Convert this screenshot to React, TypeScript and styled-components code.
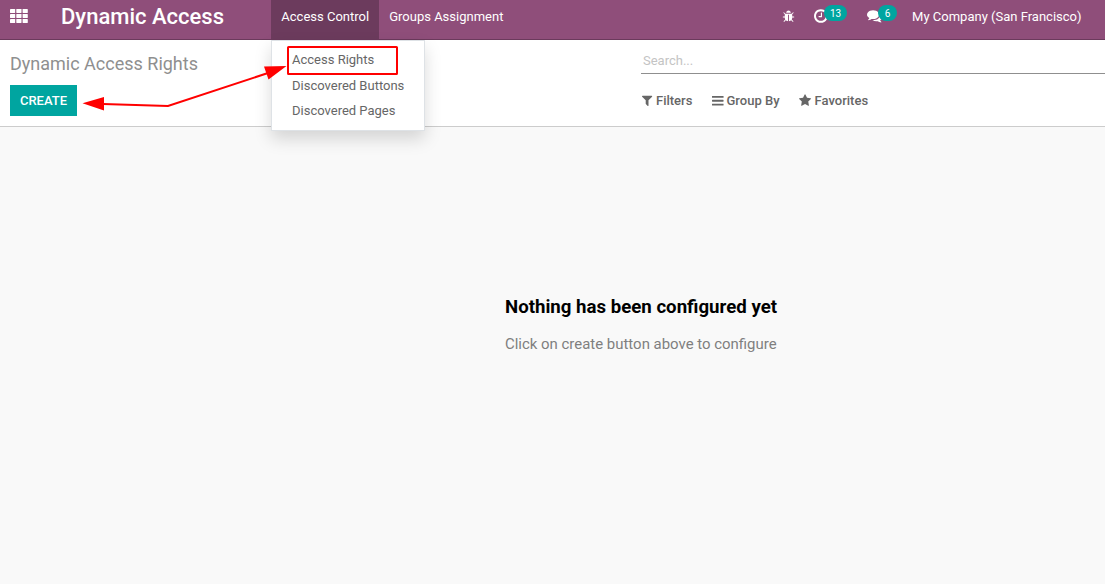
import React from "react";
import styled, { createGlobalStyle } from "styled-components";

const GlobalStyle = createGlobalStyle`
  * { box-sizing: border-box; }
  html, body, #root { height: 100%; }
  body {
    margin: 0;
    overflow: hidden;
    background: #f9f9f9;
    color: #666;
    font-family: Roboto, "Liberation Sans", sans-serif;
    font-size: 13px;
    line-height: 1.5;
  }
`;

const Page = styled.div`
  position: relative;
  display: flex;
  flex-direction: column;
  height: 100%;
`;

const Navbar = styled.header`
  display: flex;
  flex: none;
  height: 40px;
  padding-left: 10px;
  background: #8f4e7a;
  border-bottom: 1px solid #6b3a5c;
  color: #fff;
`;

const AppsIcon = styled.svg`
  display: block;
  flex: none;
  width: 18px;
  height: 14px;
  margin-top: 9px;
  fill: #fff;
`;

const Brand = styled.div`
  width: 210px;
  margin-left: 33px;
  font-size: 22px;
  font-weight: 500;
  line-height: 33px;
  white-space: nowrap;
`;

const MenuEntry = styled.div<{ $active?: boolean }>`
  position: relative;
  height: 39px;
  padding: 0 9.8px 0 10.3px;
  line-height: 33px;
  white-space: nowrap;
  background: ${(p) => (p.$active ? "#6c3b5d" : "transparent")};
`;

const Dropdown = styled.div`
  position: absolute;
  top: 40px;
  left: 0;
  z-index: 2;
  width: 154px;
  height: 91px;
  padding-top: 7px;
  background: #fff;
  border: 1px solid #dee2e6;
  box-shadow: 0 8px 16px rgba(0, 0, 0, 0.15);
  color: #666;
`;

const DropdownItem = styled.div`
  height: 25.5px;
  padding-left: 20px;
  line-height: 24px;
`;

const Systray = styled.div`
  display: flex;
  margin-left: auto;
  padding-right: 23.5px;
`;

const TrayItem = styled.div<{ $width: number }>`
  position: relative;
  width: ${(p) => p.$width}px;
`;

const Glyph = styled.svg<{ $size: number; $top?: number }>`
  display: block;
  flex: none;
  width: ${(p) => p.$size}px;
  height: ${(p) => p.$size}px;
  margin-top: ${(p) => p.$top ?? 0}px;
  fill: currentColor;
`;

const Badge = styled.span<{ $left: number; $width: number }>`
  position: absolute;
  top: 5px;
  left: ${(p) => p.$left}px;
  width: ${(p) => p.$width}px;
  height: 16px;
  border-radius: 8px;
  background: #00a5a0;
  font-size: 10px;
  line-height: 17px;
  text-align: center;
`;

const Company = styled.div`
  line-height: 33px;
  white-space: nowrap;
`;

const ControlPanel = styled.section`
  display: flex;
  flex: none;
  justify-content: space-between;
  height: 87px;
  padding-left: 10px;
  background: #fff;
  border-bottom: 1px solid #ccc;
`;

const Title = styled.h1`
  margin: 10px 0 7px;
  color: #8f8f8f;
  font-size: 18px;
  font-weight: 400;
  line-height: 28px;
`;

const CreateButton = styled.button`
  display: block;
  width: 67px;
  height: 31px;
  padding: 0;
  border: 0;
  background: #00a5a0;
  color: #fff;
  font: 500 13px/31px Roboto, sans-serif;
`;

const SearchArea = styled.div`
  width: 464px;
`;

const SearchInput = styled.input`
  display: block;
  width: 100%;
  height: 26px;
  margin-top: 8px;
  padding: 0 2px;
  border: 0;
  border-bottom: 1px solid #8f8f8f;
  background: transparent;
  font: 13px Roboto, sans-serif;
  outline: none;
  &::placeholder { color: #c4c4c4; opacity: 1; }
`;

const FilterBar = styled.div`
  display: flex;
  margin-top: 17px;
`;

const FilterButton = styled.div<{ $width: number; $gap?: number }>`
  display: flex;
  gap: ${(p) => p.$gap ?? 1}px;
  width: ${(p) => p.$width}px;
  padding-left: ${(p) => (p.$gap ? 0 : 1)}px;
  font-weight: 500;
  line-height: 20px;
  white-space: nowrap;
`;

const Empty = styled.main`
  padding: 168px 0 0 505px;
`;

const EmptyTitle = styled.h2`
  margin: 0;
  color: #000;
  font-size: 18.65px;
  font-weight: 700;
  line-height: 24px;
`;

const EmptyText = styled.p`
  margin: 14px 0 0;
  color: #7f7f7f;
  font-size: 14.95px;
  line-height: 22px;
`;

const Annotation = styled.svg`
  position: absolute;
  top: 40px;
  left: 80px;
  z-index: 3;
  width: 330px;
  height: 80px;
  pointer-events: none;
`;

const BUG =
  "M1696 960q0 26-19 45t-45 19h-224q0 171-67 290l208 209q19 19 19 45t-19 45q-18 19-45 19t-45-19l-198-197q-5 5-15 13t-42 28.500-65 36.500-82 29-97 13v-896h-128v896q-51 0-101.500-13.500t-87-33-66-39-43.500-32.500l-15-14-183 207q-20 21-48 21-24 0-43-16-19-18-20.500-44.500t15.500-46.500l202-227q-58-114-58-274h-224q-26 0-45-19t-19-45 19-45 45-19h224v-294l-173-173q-19-19-19-45t19-45 45-19 45 19l173 173h844l173-173q19-19 45-19t45 19 19 45-19 45l-173 173v294h224q26 0 45 19t19 45zm-480-576h-640q0-133 93.500-226.500t226.500-93.500 226.500 93.500 93.500 226.500z";
const CLOCK =
  "M896 544v448q0 14-9 23t-23 9H544q-14 0-23-9t-9-23v-64q0-14 9-23t23-9h224V544q0-14 9-23t23-9h64q14 0 23 9t9 23zm416 352q0-148-73-273t-198-198-273-73-273 73-198 198-73 273 73 273 198 198 273 73 273-73 198-198 73-273zm224 0q0 209-103 385.500T1153.500 1561 768 1664t-385.500-103T103 1281.500 0 896t103-385.500T382.500 231 768 128t385.500 103T1433 510.500 1536 896z";
const COMMENTS =
  "M1408 768q0 139-94 257t-256.500 186.500-353.500 68.500q-86 0-176-16-124 88-278 128-36 9-86 16h-3q-11 0-20.500-8t-11.500-21q-1-3-1-6.500t.5-6.500 2-6l2.500-5 3.500-5.500 4-5 4.500-5 4-4.500q5-6 23-25t26-29.500 22.500-29 25-38.500 20.500-44q-124-72-195-177t-71-224q0-139 94-257t256.500-186.500 353.500-68.500 353.500 68.500 256.500 186.500 94 257zm384 256q0 120-71 224.500t-195 176.500q10 24 20.500 44t25 38.500 22.500 29 26 29.500 23 25q1 1 4 4.500t4.500 5 4 5 3.500 5.500l2.500 5 2 6 .5 6.500-1 6.500q-3 14-13 22t-22 7q-50-7-86-16-154-40-278-128-90 16-176 16-271 0-472-132 58 4 88 4 161 0 309-45t264-129q125-92 192-212t67-254q0-77-23-152 129 71 204 178t75 230z";
const FILTER =
  "M1403 295q17 41-14 70l-493 493v742q0 42-39 59-13 5-25 5-27 0-45-19l-256-256q-19-19-19-45V858L19 365q-31-29-14-70 17-39 59-39h1280q42 0 59 39z";
const BARS =
  "M1536 1344v128q0 26-19 45t-45 19H64q-26 0-45-19t-19-45v-128q0-26 19-45t45-19h1408q26 0 45 19t19 45zm0-512v128q0 26-19 45t-45 19H64q-26 0-45-19t-19-45V832q0-26 19-45t45-19h1408q26 0 45 19t19 45zm0-512v128q0 26-19 45t-45 19H64q-26 0-45-19t-19-45V320q0-26 19-45t45-19h1408q26 0 45 19t19 45z";
const STAR =
  "M1664 647q0 22-26 48l-363 354 86 500q1 7 1 20 0 21-10.500 35.500t-30.500 14.500q-19 0-40-12l-449-236-449 236q-22 12-40 12-21 0-31.500-14.500t-10.500-35.500q0-6 2-20l86-500L25 695Q0 668 0 647q0-37 56-46l502-73 225-455q19-41 49-41t49 41l225 455 502 73q56 9 56 46z";

function Icon({ path, size, top }: { path: string; size: number; top?: number }) {
  return (
    <Glyph $size={size} $top={top} viewBox="0 0 1792 1792" overflow="visible">
      <path d={path} />
    </Glyph>
  );
}

export default function App() {
  return (
    <Page>
      <GlobalStyle />
      <Navbar>
        <AppsIcon viewBox="0 0 18 14">
          {[0, 5, 10].map((y) =>
            [0, 6.3, 12.6].map((x) => (
              <rect key={`${x}-${y}`} x={x} y={y} width="5.2" height="4" rx="0.4" />
            ))
          )}
        </AppsIcon>
        <Brand>Dynamic Access</Brand>
        <MenuEntry $active>
          Access Control
          <Dropdown>
            <DropdownItem>Access Rights</DropdownItem>
            <DropdownItem>Discovered Buttons</DropdownItem>
            <DropdownItem>Discovered Pages</DropdownItem>
          </Dropdown>
        </MenuEntry>
        <MenuEntry>Groups Assignment</MenuEntry>
        <Systray>
          <TrayItem $width={32}>
            <Icon path={BUG} size={13} top={10} />
          </TrayItem>
          <TrayItem $width={53}>
            <Icon path={CLOCK} size={16} top={8} />
            <Badge $left={10} $width={23}>13</Badge>
          </TrayItem>
          <TrayItem $width={45}>
            <Icon path={COMMENTS} size={15.5} top={8} />
            <Badge $left={11} $width={19}>6</Badge>
          </TrayItem>
          <Company>My Company (San Francisco)</Company>
        </Systray>
      </Navbar>

      <ControlPanel>
        <div>
          <Title>Dynamic Access Rights</Title>
          <CreateButton>CREATE</CreateButton>
        </div>
        <SearchArea>
          <SearchInput placeholder="Search..." />
          <FilterBar>
            <FilterButton $width={70}>
              <Icon path={FILTER} size={13} top={3} />
              Filters
            </FilterButton>
            <FilterButton $width={88}>
              <Icon path={BARS} size={13.5} top={3} />
              Group By
            </FilterButton>
            <FilterButton $width={80} $gap={2.6}>
              <Icon path={STAR} size={13} top={3} />
              Favorites
            </FilterButton>
          </FilterBar>
        </SearchArea>
      </ControlPanel>

      <Empty>
        <EmptyTitle>Nothing has been configured yet</EmptyTitle>
        <EmptyText>Click on create button above to configure</EmptyText>
      </Empty>

      <Annotation viewBox="80 40 330 80">
        <rect x="288" y="47" width="109" height="27" fill="none" stroke="#f00" strokeWidth="2" rx="0.5" />
        <path d="M103 104L168 106L268 73" fill="none" stroke="#f00" strokeWidth="2" />
        <path d="M82.500 103.300L104 97V110.500ZM286.500 66L264 66.500L268.500 79.500Z" fill="#f00" />
      </Annotation>
    </Page>
  );
}
